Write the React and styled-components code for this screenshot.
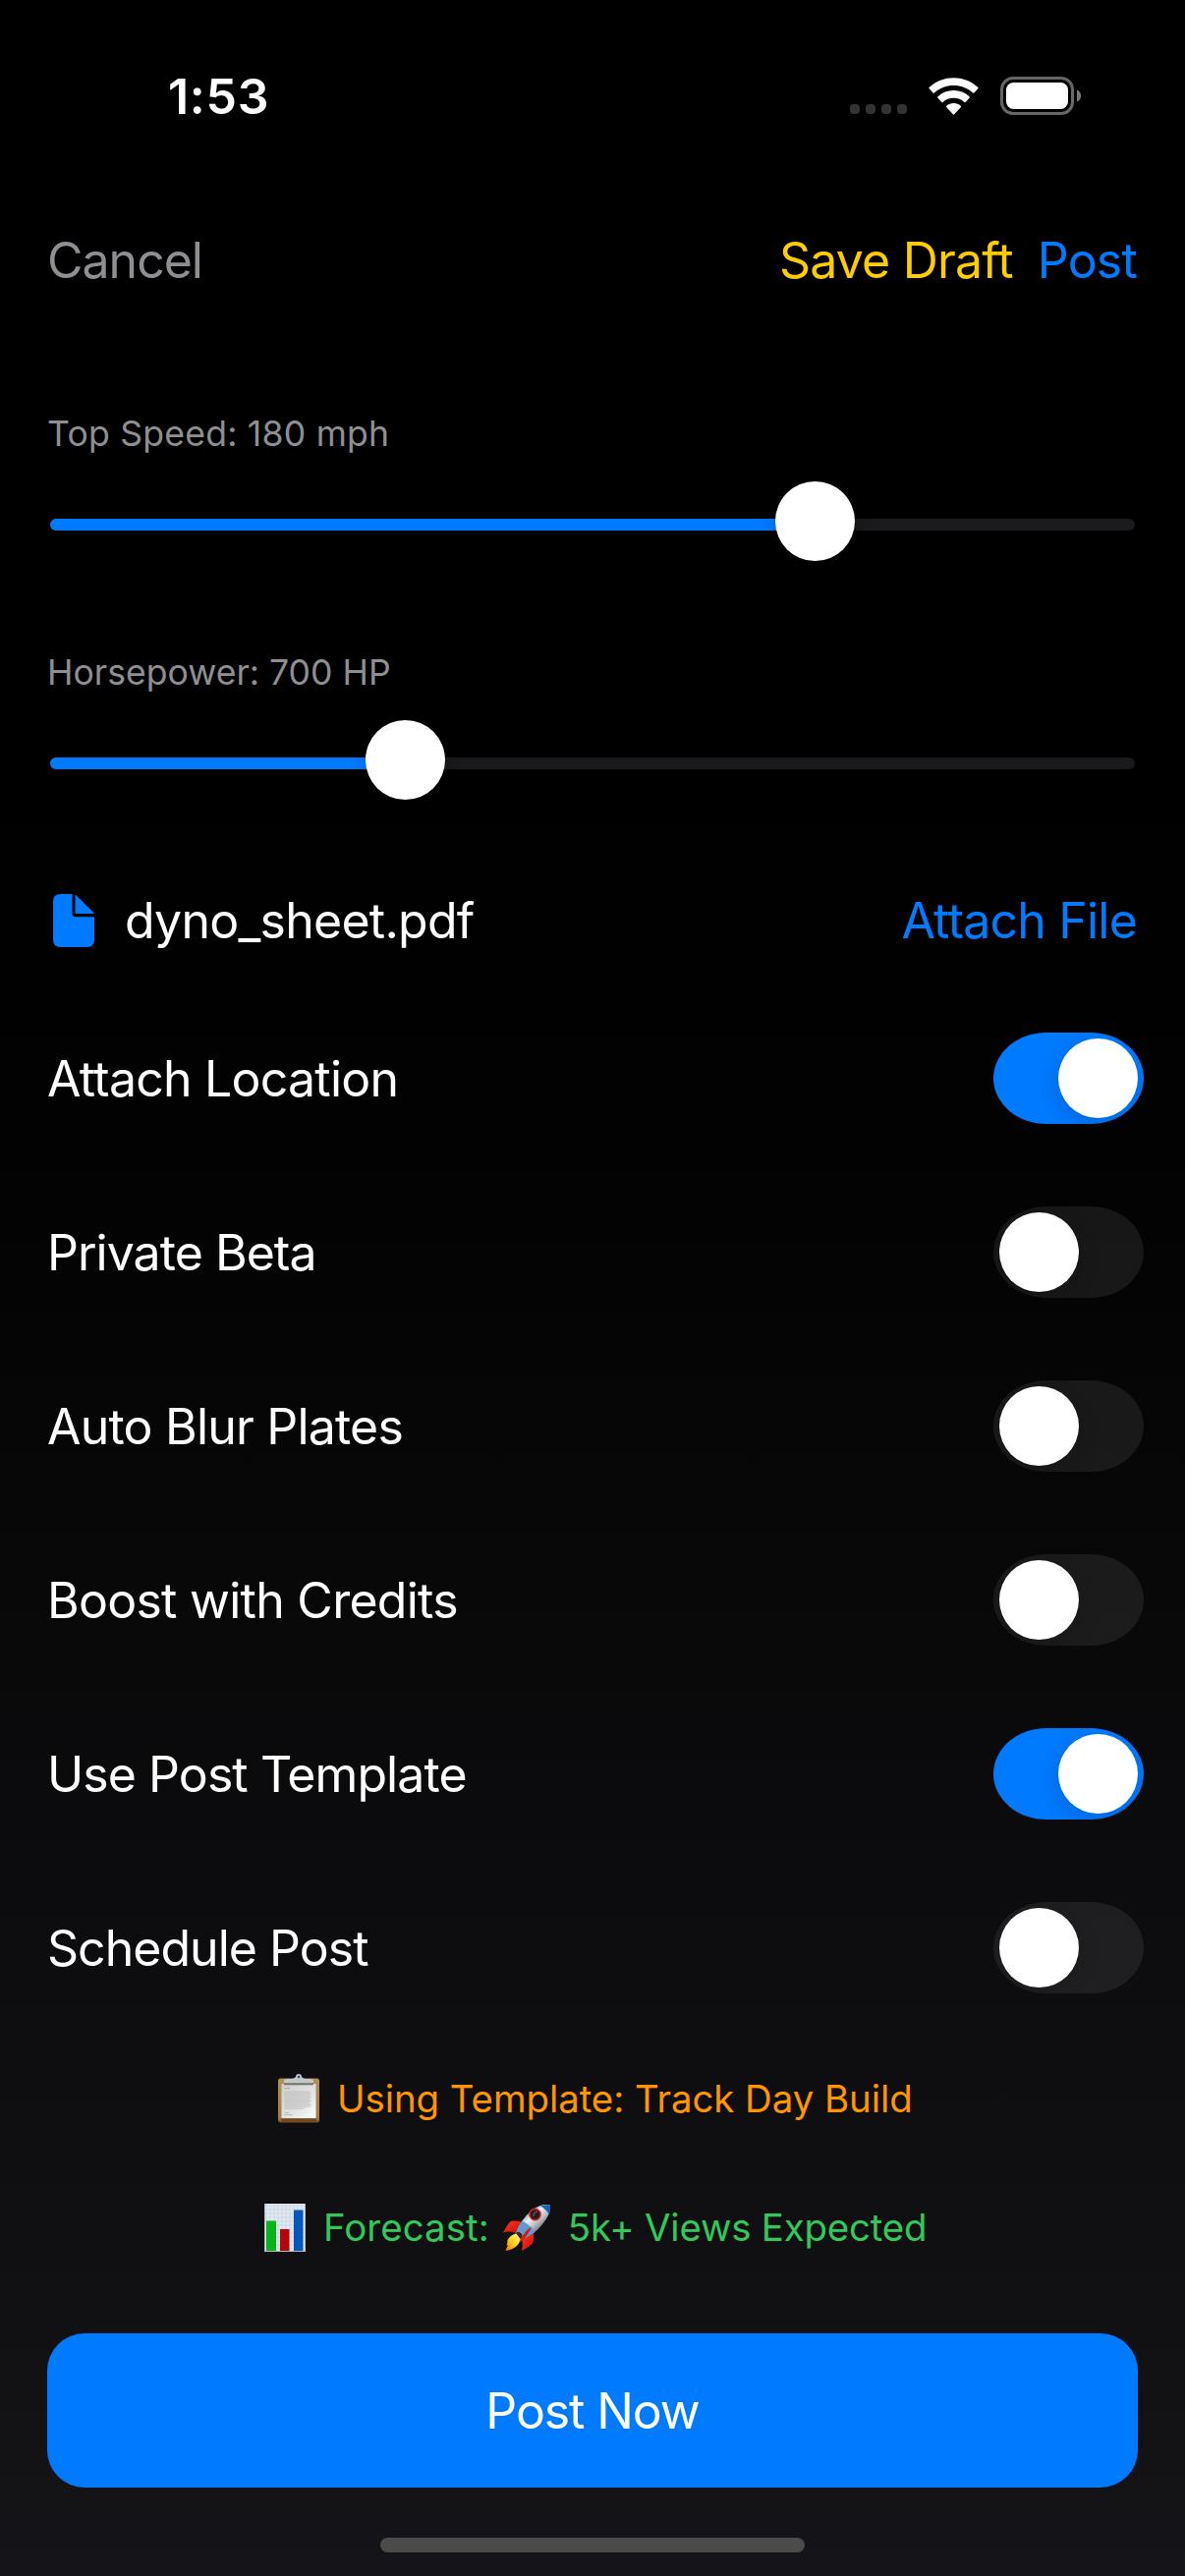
import React from "react";
import styled, { createGlobalStyle } from "styled-components";

const GlobalStyle = createGlobalStyle`
  html, body { margin: 0; padding: 0; background: #000; }
  *, *::before, *::after { box-sizing: border-box; }
`;

const Screen = styled.main`
  width: 1206px;
  height: 2622px;
  overflow: hidden;
  display: flex;
  flex-direction: column;
  background: linear-gradient(180deg, #000 0%, #000 28%, #020203 44%, #070708 58%, #0d0d0f 76%, #111113 90%, #151519 100%);
  color: #fff;
  font-family: Inter, "Liberation Sans", sans-serif;
  font-size: 50px;
  line-height: 60px;
  white-space: pre;
`;

const StatusBar = styled.header`
  height: 195px;
  padding: 0 106px 0 171px;
  display: flex;
  align-items: center;
  justify-content: space-between;
`;

const Time = styled.span`
  font-size: 50px;
  font-weight: 600;
  letter-spacing: ${(p) => p.$track}px;
`;

const StatusIcons = styled.div`
  display: flex;
  align-items: center;
`;

const SignalDots = styled.div`
  display: flex;
  gap: 6px;
  margin: 27px 22px 0 0;
`;

const Dot = styled.i`
  width: 10px;
  height: 10px;
  border-radius: 4px;
  background: #333;
`;

const WifiIcon = styled.svg`
  width: 51px;
  height: 38px;
  margin-right: 22px;
`;

const BatteryIcon = styled.svg`
  width: 82px;
  height: 39px;
`;

const Toolbar = styled.nav`
  height: 139px;
  padding: 0 49px 0 48px;
  display: flex;
  align-items: center;
  justify-content: space-between;
`;

const ToolbarGroup = styled.div`
  display: flex;
  gap: ${(p) => p.$gap}px;
`;

const TextButton = styled.button`
  border: 0;
  padding: 0;
  background: none;
  font: inherit;
  color: ${(p) => p.$color};
  letter-spacing: ${(p) => p.$track || 0}px;
`;

const Sliders = styled.section`
  padding: 86px 48px 0;
  display: flex;
  flex-direction: column;
  gap: 92px;
`;

const SliderField = styled.div`
  display: flex;
  flex-direction: column;
  gap: 26px;
`;

const SliderLabel = styled.label`
  font-size: 35.6px;
  line-height: 44px;
  color: #8e8e93;
  letter-spacing: ${(p) => p.$track}px;
`;

const SliderControl = styled.div`
  height: 81px;
  padding: 0 3px;
  display: flex;
  align-items: center;
`;

const SliderFill = styled.div`
  width: ${(p) => p.$width}px;
  height: 12px;
  margin-top: 7px;
  border-radius: 6px 0 0 6px;
  background: #007aff;
`;

const SliderRest = styled.div`
  flex: 1;
  height: 12px;
  margin-top: 7px;
  border-radius: 0 6px 6px 0;
  background: #1a1a1c;
`;

const SliderThumb = styled.div`
  z-index: 1;
  width: 81px;
  height: 81px;
  margin: 0 -20px;
  border-radius: 50%;
  background: #fff;
  box-shadow: 0 2px 18px rgba(0, 0, 0, 0.2);
`;

const FileRow = styled.section`
  height: 60px;
  margin-top: 93px;
  padding: 0 49px 0 54px;
  display: flex;
  align-items: center;
`;

const FileIcon = styled.svg`
  width: 42px;
  height: 54px;
  margin-right: 31px;
`;

const FileName = styled.span`
  flex: 1;
  letter-spacing: ${(p) => p.$track}px;
`;

const Toggles = styled.section`
  margin-top: 84px;
  padding: 0 42px 0 48px;
  display: flex;
  flex-direction: column;
  gap: 84px;
`;

const ToggleRow = styled.div`
  height: 93px;
  display: flex;
  align-items: center;
  justify-content: space-between;
`;

const ToggleLabel = styled.span`
  letter-spacing: ${(p) => p.$track}px;
`;

const Switch = styled.div`
  width: 153px;
  height: 93px;
  padding: 6px;
  display: flex;
  justify-content: ${(p) => (p.$on ? "flex-end" : "flex-start")};
  overflow: hidden;
  border-radius: 54px / 46.5px;
  background: ${(p) => (p.$on ? "#007aff" : "rgba(122, 122, 126, 0.17)")};
`;

const Knob = styled.div`
  width: 81px;
  height: 81px;
  border-radius: 50%;
  background: #fff;
  box-shadow: 0 6px 22px rgba(0, 0, 0, 0.16);
`;

const Notes = styled.section`
  margin-top: 82px;
  display: flex;
  flex-direction: column;
  gap: 81px;
`;

const Note = styled.p`
  height: 50px;
  margin: 0;
  padding-left: ${(p) => p.$start}px;
  display: flex;
  align-items: center;
  font-size: 38.4px;
  color: ${(p) => p.$color};
`;

const NoteText = styled.span`
  letter-spacing: ${(p) => p.$track}px;
`;

const Emoji = styled.svg`
  flex: none;
  width: ${(p) => p.$w}px;
  height: 50px;
  margin: 0 ${(p) => p.$right}px 0 ${(p) => p.$left || 0}px;
`;

const PrimaryButton = styled.button`
  height: 157px;
  margin: 83px 48px 0;
  border: 0;
  border-radius: 38px;
  background: #007aff;
  color: #fff;
  font: inherit;
  letter-spacing: ${(p) => p.$track}px;
`;

const HomeIndicator = styled.div`
  width: 432px;
  height: 15px;
  margin: 51px auto 0;
  border-radius: 8px;
  background: #4b4b4b;
`;

const sliders = [
  { label: "Top Speed: 180 mph", track: 0.22, fill: 758 },
  { label: "Horsepower: 700 HP", track: 0, fill: 341 },
];

const toggles = [
  { label: "Attach Location", on: true, track: -0.78 },
  { label: "Private Beta", on: false, track: -0.97 },
  { label: "Auto Blur Plates", on: false, track: -0.8 },
  { label: "Boost with Credits", on: false, track: -0.74 },
  { label: "Use Post Template", on: true, track: -0.93 },
  { label: "Schedule Post", on: false, track: -0.98 },
];

function Wifi() {
  return (
    <WifiIcon viewBox="0 0 51 38" fill="#fff">
      <path d="M.8 11.2a.9.9 0 0 1 0-1.4C7.500 3.500 16 .2 25.500.2s18 3.300 24.700 9.600a.9.9 0 0 1 0 1.400l-3.700 4.200a1 1 0 0 1-1.400 0C39.700 10.500 33 7.900 25.500 7.900S11.300 10.500 5.900 15.400a1 1 0 0 1-1.400 0Z" />
      <path d="M9.500 20.800a1 1 0 0 1 0-1.500c4.300-4 9.800-6.200 16-6.200s11.700 2.200 16 6.200a1 1 0 0 1 0 1.500l-3.800 4.100a1 1 0 0 1-1.400 0c-2.900-2.600-6.600-4.100-10.800-4.100s-7.900 1.500-10.800 4.100a1 1 0 0 1-1.400 0Z" />
      <path d="M18.300 30.300a1 1 0 0 1 0-1.500c1.900-1.700 4.400-2.700 7.200-2.700s5.300 1 7.200 2.700a1 1 0 0 1 0 1.500l-6.500 7a1 1 0 0 1-1.400 0Z" />
    </WifiIcon>
  );
}

function Battery() {
  return (
    <BatteryIcon viewBox="0 0 82 39">
      <rect x="1.500" y="1.500" width="72" height="36" rx="11.500" fill="none" stroke="#666" strokeWidth="3" />
      <rect x="6" y="6" width="63" height="27" rx="7.500" fill="#fff" />
      <path d="M78 13.500c2.500 1 4.100 3.300 4.100 6s-1.600 5-4.100 6Z" fill="#777" />
    </BatteryIcon>
  );
}

function Document() {
  return (
    <FileIcon viewBox="0 0 42 54" fill="#007aff">
      <path d="M7.500 0H19.500V19.500Q19.500 23.300 23.300 23.300H42V46.500Q42 54 34.500 54H7.500Q0 54 0 46.500V7.500Q0 0 7.500 0Z" />
      <path d="M22.500.7Q23.400 1 24.300 2L40.300 18Q41.500 19.200 41.800 20H24Q22.500 20 22.500 18.500Z" />
    </FileIcon>
  );
}

function Clipboard({ right }) {
  const lines = Array.from({ length: 10 }, (_, i) => 17.5 + i * 1.9);
  return (
    <Emoji viewBox="0 0 42 50" $w={42} $right={right}>
      <defs>
        <linearGradient id="board" x1="0" y1="0" x2="0" y2="1">
          <stop offset="0" stopColor="#b98d50" />
          <stop offset=".9" stopColor="#a77c42" />
          <stop offset="1" stopColor="#6f4a1e" />
        </linearGradient>
        <linearGradient id="sheet" x1="0" y1="0" x2="1" y2="1">
          <stop offset="0" stopColor="#cfcfcf" />
          <stop offset=".6" stopColor="#e3e3e3" />
          <stop offset="1" stopColor="#fff" />
        </linearGradient>
      </defs>
      <rect x="0" y="4.500" width="42" height="45" rx="2.500" fill="url(#board)" />
      <rect x="3" y="45.500" width="36" height="3" fill="#70491f" />
      <rect x="3.500" y="10" width="35" height="35" fill="url(#sheet)" />
      <rect x="6" y="9.500" width="30" height="1.800" fill="#777" />
      <path d="M6 9V7Q6 5 9 5H14Q17 4.700 18 3A3 3 0 0 1 24 3Q25 4.700 28 5H33Q36 5 36 7V9Z" fill="#bfc9d0" />
      <circle cx="21" cy="3" r="1.300" fill="#4a4e52" />
      <rect x="6.500" y="14" width="5.500" height="1" fill="#a8a8a8" />
      {lines.map((y, i) => (
        <rect key={y} x="6.500" y={y} width={i === 9 ? 20 : 26 + (i % 2)} height="1" fill="#bdbdbd" />
      ))}
      <rect x="6.500" y="39" width="5" height="1" fill="#bbb" />
      <rect x="6.500" y="41" width="8" height="1" fill="#bbb" />
    </Emoji>
  );
}

function BarChart({ right }) {
  const grid = Array.from({ length: 12 }, (_, i) => 2 + i * 4);
  return (
    <Emoji viewBox="0 0 42 50" $w={42} $right={right}>
      <rect x="0" y="1" width="42" height="49" fill="#e3e9ef" />
      {grid.map((n) => (
        <path key={n} d={`M0 ${n + 1}H42${n < 42 ? `M${n} 1V50` : ""}`} stroke="#c3d5e8" strokeWidth=".8" />
      ))}
      <rect x="2" y="18.500" width="10" height="31" fill="#07b51b" />
      <rect x="16" y="27" width="9.500" height="22.500" fill="#b50508" />
      <rect x="30" y="7.500" width="9.500" height="42" fill="#0758bd" />
      <path d="M.5 1V49.500H41.500V1" fill="none" stroke="#b0b7be" />
    </Emoji>
  );
}

function RocketEmoji({ left, right }) {
  return (
    <Emoji viewBox="0 0 49 50" $w={49} $left={left} $right={right}>
      <defs>
        <linearGradient id="hull" x1=".25" y1=".2" x2=".75" y2=".75">
          <stop offset="0" stopColor="#5f7f9e" />
          <stop offset=".35" stopColor="#eef1f3" />
          <stop offset=".65" stopColor="#b9bec2" />
          <stop offset="1" stopColor="#5c6166" />
        </linearGradient>
        <linearGradient id="flame" x1="1" y1="0" x2="0" y2="1">
          <stop offset="0" stopColor="#fff9b0" />
          <stop offset=".5" stopColor="#ffd21c" />
          <stop offset="1" stopColor="#f07800" />
        </linearGradient>
        <linearGradient id="fin" x1="0" y1="0" x2="1" y2="1">
          <stop offset="0" stopColor="#ff3a20" />
          <stop offset="1" stopColor="#c80808" />
        </linearGradient>
      </defs>
      <path d="M18.500 19.500Q10 17.500 6.500 20Q3.500 24 0 30.500Q6 28.500 13 31Z" fill="url(#fin)" />
      <path d="M31 31.500Q32 37 30 41.500Q25 46 19 49Q20.500 42 19 37Z" fill="url(#fin)" />
      <path d="M14 31Q7 33 4.500 38Q4.500 41 3.500 43.500L5 43L2.500 49Q14 47.500 18 38Z" fill="url(#flame)" />
      <path d="M48 2.500Q39 .500 29 8Q18 17 13 31L18 37Q31 34 40 22Q49 11 48 2.500Z" fill="url(#hull)" />
      <path d="M48 2.500Q43 1.500 38 3.500Q43 6 47 12Q48.800 7 48 2.500Z" fill="#1b62b5" />
      <path d="M19 19Q25 20 32.500 30Q26 35 18 37L13 31Q14.500 25 19 19Z" fill="#5e9bd0" />
      <path d="M13 31Q15 28.500 18 31T18 37Z" fill="#3b2416" />
      <path d="M29 24.500Q22 28 16 41Q25 35 29 24.500Z" fill="#d91816" />
      <circle cx="32.500" cy="12" r="5.600" fill="#231a1d" stroke="#d2232a" strokeWidth="1.600" />
      <path d="M31 14Q31 10 35 9" stroke="#4b474a" strokeWidth="2" fill="none" />
    </Emoji>
  );
}

export default function App() {
  return (
    <>
      <GlobalStyle />
      <Screen>
        <StatusBar>
          <Time $track={0.7}>1:53</Time>
          <StatusIcons>
            <SignalDots>
              <Dot />
              <Dot />
              <Dot />
              <Dot />
            </SignalDots>
            <Wifi />
            <Battery />
          </StatusIcons>
        </StatusBar>

        <Toolbar>
          <TextButton $color="#8e8e93" $track={-1}>Cancel</TextButton>
          <ToolbarGroup $gap={25}>
            <TextButton $color="#ffcc00" $track={-0.8}>Save Draft</TextButton>
            <TextButton $color="#007aff" $track={-0.8}>Post</TextButton>
          </ToolbarGroup>
        </Toolbar>

        <Sliders>
          {sliders.map((s) => (
            <SliderField key={s.label}>
              <SliderLabel $track={s.track}>{s.label}</SliderLabel>
              <SliderControl>
                <SliderFill $width={s.fill} />
                <SliderThumb />
                <SliderRest />
              </SliderControl>
            </SliderField>
          ))}
        </Sliders>

        <FileRow>
          <Document />
          <FileName $track={-0.75}>dyno_sheet.pdf</FileName>
          <TextButton $color="#007aff" $track={-0.8}>Attach File</TextButton>
        </FileRow>

        <Toggles>
          {toggles.map((t) => (
            <ToggleRow key={t.label}>
              <ToggleLabel $track={t.track}>{t.label}</ToggleLabel>
              <Switch $on={t.on}>
                <Knob />
              </Switch>
            </ToggleRow>
          ))}
        </Toggles>

        <Notes>
          <Note $color="#ff9500" $start={283}>
            <Clipboard right={18} />
            <NoteText $track={-0.05}>Using Template: Track Day Build</NoteText>
          </Note>
          <Note $color="#34c759" $start={269}>
            <BarChart right={18} />
            <NoteText $track={0.08}>Forecast:</NoteText>
            <RocketEmoji left={14} right={17} />
            <NoteText $track={-0.18}>5k+ Views Expected</NoteText>
          </Note>
        </Notes>

        <PrimaryButton $track={-1.1}>Post Now</PrimaryButton>
        <HomeIndicator />
      </Screen>
    </>
  );
}
